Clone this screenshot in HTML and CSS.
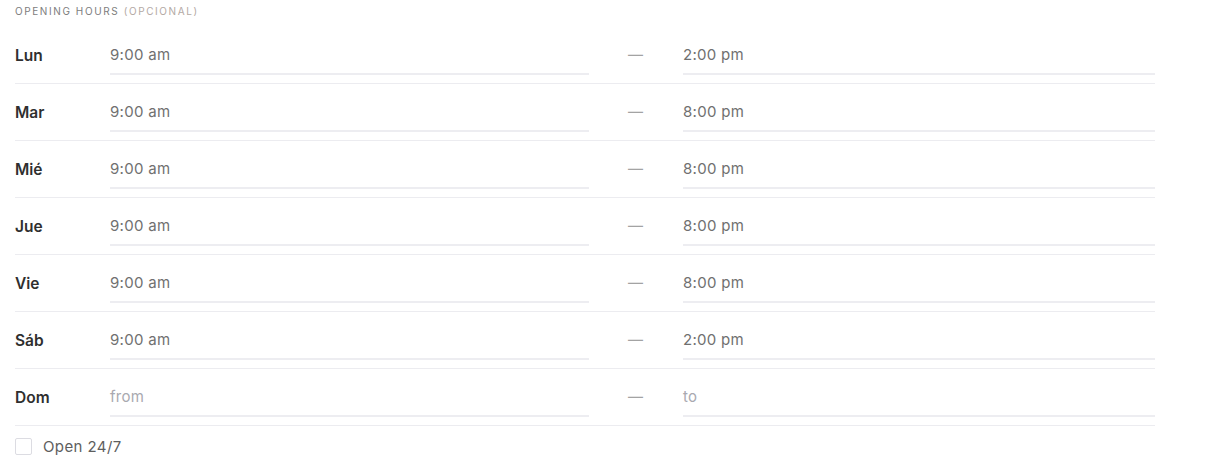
FILE: index.html
```html
<!DOCTYPE html>
<html>
<head>
<meta charset="utf-8">
<link rel="stylesheet" href="styles.css">
</head>
<body>
<div class="hours">
  <div class="title">Opening hours <span class="opt">(opcional)</span></div>
  <div class="row"><div class="day">Lun</div><div class="field">9:00 am</div><div class="dash">—</div><div class="field">2:00 pm</div></div>
  <div class="row"><div class="day">Mar</div><div class="field">9:00 am</div><div class="dash">—</div><div class="field">8:00 pm</div></div>
  <div class="row"><div class="day">Mié</div><div class="field">9:00 am</div><div class="dash">—</div><div class="field">8:00 pm</div></div>
  <div class="row"><div class="day">Jue</div><div class="field">9:00 am</div><div class="dash">—</div><div class="field">8:00 pm</div></div>
  <div class="row"><div class="day">Vie</div><div class="field">9:00 am</div><div class="dash">—</div><div class="field">8:00 pm</div></div>
  <div class="row"><div class="day">Sáb</div><div class="field">9:00 am</div><div class="dash">—</div><div class="field">2:00 pm</div></div>
  <div class="row"><div class="day">Dom</div><div class="field placeholder">from</div><div class="dash">—</div><div class="field placeholder">to</div></div>
  <label class="check"><span class="box"></span><span class="check-text">Open 24/7</span></label>
</div>
</body>
</html>
```
FILE: styles.css
```css
html, body {
  margin: 0;
  padding: 0;
  background: #fff;
  font-family: Inter, "Noto Sans", sans-serif;
}
.hours {
  width: 1140px;
  padding: 4px 0 0 15px;
}
.title {
  font-size: 10px;
  line-height: 14px;
  letter-spacing: 1.6px;
  text-transform: uppercase;
  color: #7d7d7d;
  margin-bottom: 9px;
}
.opt {
  color: #b3a9a4;
}
.row {
  display: grid;
  grid-template-columns: 95px 479px 94px 472px;
  align-items: center;
  padding: 8px 0;
  border-bottom: 1px solid #ececf0;
}
.day {
  font-size: 15.5px;
  font-weight: 600;
  color: #2f2f2f;
}
.field {
  height: 38px;
  line-height: 40px;
  border-bottom: 2px solid #ededf1;
  font-size: 15px;
  letter-spacing: 0.3px;
  color: #707070;
}
.field.placeholder {
  color: #a9a9b0;
}
.dash {
  padding-left: 39px;
  font-size: 15px;
  line-height: 40px;
  color: #a3a3a3;
}
.check {
  display: flex;
  align-items: center;
  height: 40px;
}
.box {
  width: 15px;
  height: 15px;
  border: 1px solid #dcdce2;
  border-radius: 2px;
  margin-right: 11px;
}
.check-text {
  font-size: 15px;
  letter-spacing: 0.4px;
  color: #5e5e5e;
}
```
